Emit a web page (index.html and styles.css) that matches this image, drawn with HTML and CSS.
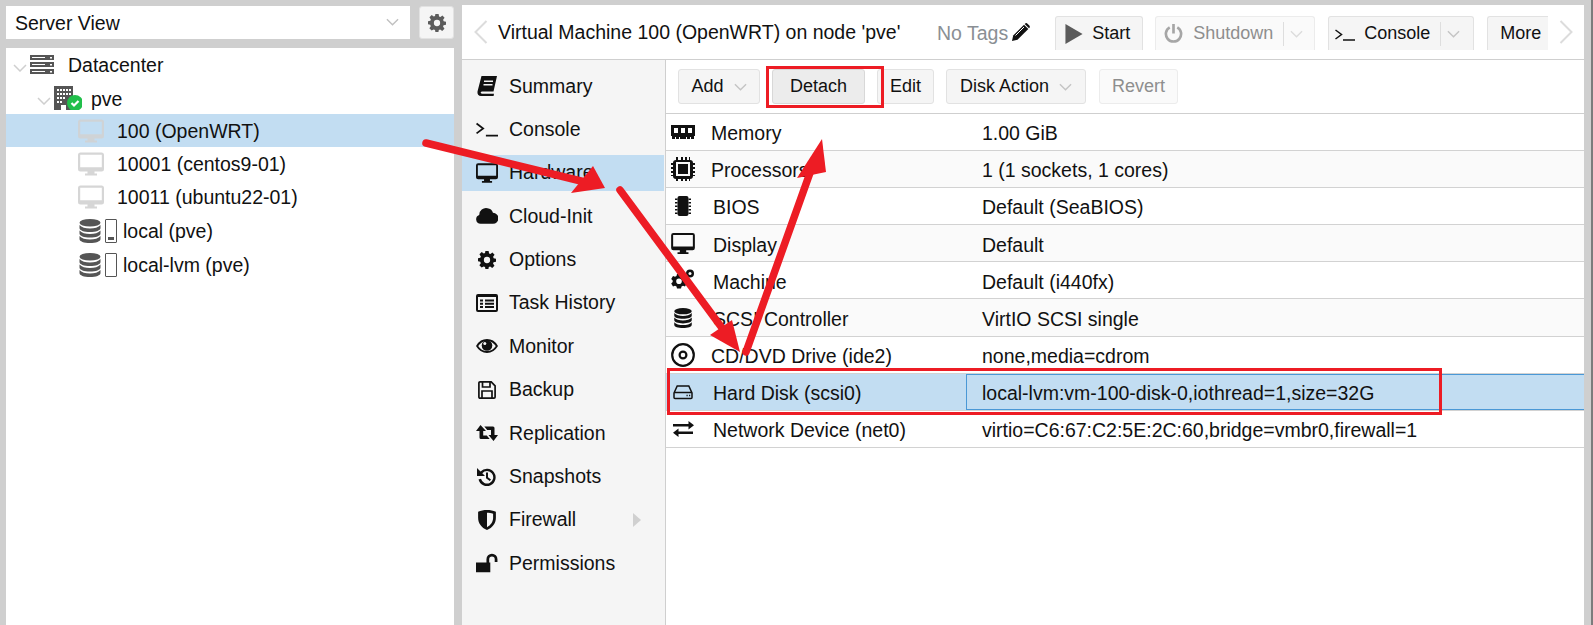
FILE: index.html
```html
<!DOCTYPE html>
<html lang="en">
<head>
<meta charset="utf-8">
<title>Virtual Machine 100</title>
<link rel="stylesheet" href="styles.css">
</head>
<body>
<svg width="0" height="0" class="defs">
  <defs>
    <symbol id="i-monitor" viewBox="0 0 26 23"><path fill-rule="evenodd" d="M2.500 0h21A2.500 2.500 0 0 1 26 2.500v14a2.500 2.500 0 0 1-2.500 2.500h-21A2.500 2.500 0 0 1 0 16.500v-14A2.500 2.500 0 0 1 2.500 0zM2.200 2.200v12.600h21.600V2.200zM9.500 19h7v2h2.500v2H7v-2h2.500z"/></symbol>
    <symbol id="i-db" viewBox="0 0 22 24"><ellipse cx="11" cy="3.800" rx="10.500" ry="3.800"/><path d="M.5 6c2 2.500 6 3.500 10.500 3.500S19.500 8.500 21.500 6v3c0 2.500-4.500 4-10.500 4S.5 11.500.5 9z"/><path d="M.5 11.500c2 2.500 6 3.500 10.500 3.500s8.500-1 10.500-3.500v3c0 2.500-4.500 4-10.500 4S.5 17 .5 14.500z"/><path d="M.5 17c2 2.500 6 3.500 10.500 3.500S19.500 19.500 21.500 17v3c0 2.500-4.500 4-10.500 4S.5 22.500.5 20z"/></symbol>
    <symbol id="i-gear" viewBox="0 0 20 20"><path fill-rule="evenodd" d="M8.200 0h3.600l.5 2.700 1.500.6L16 1.700l2.400 2.500-1.600 2.300.6 1.500 2.600.5v3.500l-2.700.5-.6 1.500 1.600 2.300-2.500 2.500-2.300-1.600-1.500.6-.5 2.700H8.300l-.5-2.700-1.500-.6L4 18.300l-2.500-2.500 1.600-2.300-.6-1.500L0 11.500V8l2.600-.5.6-1.500-1.600-2.300L4.100 1.200l2.300 1.600 1.400-.6zM10 6.500a3.500 3.500 0 1 0 0 7 3.500 3.500 0 0 0 0-7z"/></symbol>
  </defs>
</svg>

<div class="app">
  <aside class="left">
    <div class="left-top">
      <div class="select">
        <span class="select-text">Server View</span>
        <svg class="chev chev-gray" viewBox="0 0 14 8"><path d="M1 1l6 6 6-6"/></svg>
      </div>
      <div class="gear-btn"><svg class="gear-icon"><use href="#i-gear"/></svg></div>
    </div>
    <div class="tree">
      <div class="tree-row lvl0">
        <svg class="chev chev-tree" viewBox="0 0 14 8"><path d="M1 1l6 6 6-6"/></svg>
        <svg class="ic-dc" viewBox="0 0 24 19"><path d="M0 0h24v5H0zM0 7h24v5H0zM0 14h24v5H0z" fill="#555"/><path d="M2 2h13v1H2zM2 9h13v1H2zM2 16h13v1H2zM20 2h2v1.500h-2zM20 9h2v1.500h-2zM20 16h2v1.500h-2z" fill="#fff"/></svg>
        <span class="tree-text dc-text">Datacenter</span>
      </div>
      <div class="tree-row lvl1">
        <svg class="chev chev-tree" viewBox="0 0 14 8"><path d="M1 1l6 6 6-6"/></svg>
        <svg class="ic-node" viewBox="0 0 28 24">
          <path d="M0 0h19v24H0z" fill="#555"/>
          <path d="M3 3h2v2H3zM6 3h2v2H6zM9 3h2v2H9zM12 3h2v2h-2zM15 3h2v2h-2zM3 7h2v2H3zM6 7h2v2H6zM9 7h2v2H9zM12 7h2v2h-2zM15 7h2v2h-2zM3 11h2v2H3zM6 11h2v2H6zM9 11h2v2H9zM3 15h2v2H3zM6 15h2v2H6zM7 19h5v5H7z" fill="#fff"/>
          <circle cx="21" cy="17" r="8" fill="#21bf4b"/>
          <path d="M17.500 17l2.500 2.500 4.500-4.500" fill="none" stroke="#fff" stroke-width="2.200"/>
        </svg>
        <span class="tree-text">pve</span>
      </div>
      <div class="tree-row vm selected">
        <svg class="ic-vm"><use href="#i-monitor"/></svg>
        <span class="tree-text">100 (OpenWRT)</span>
      </div>
      <div class="tree-row vm">
        <svg class="ic-vm"><use href="#i-monitor"/></svg>
        <span class="tree-text">10001 (centos9-01)</span>
      </div>
      <div class="tree-row vm">
        <svg class="ic-vm"><use href="#i-monitor"/></svg>
        <span class="tree-text">10011 (ubuntu22-01)</span>
      </div>
      <div class="tree-row st">
        <svg class="ic-db"><use href="#i-db"/></svg>
        <span class="st-bar"><span class="st-fill"></span></span>
        <span class="tree-text">local (pve)</span>
      </div>
      <div class="tree-row st">
        <svg class="ic-db"><use href="#i-db"/></svg>
        <span class="st-bar"></span>
        <span class="tree-text">local-lvm (pve)</span>
      </div>
    </div>
  </aside>

  <main class="right">
    <header class="head">
      <svg class="nav nav-l" viewBox="0 0 14 30"><path d="M12.500 4L1.500 15l11 11"/></svg>
      <span class="title">Virtual Machine 100 (OpenWRT) on node 'pve'</span>
      <span class="tags">No Tags</span>
      <svg class="pencil" viewBox="0 0 18 18"><path d="M0 18l1.200-5.500L12 1.700 16.300 6 5.500 16.800z"/><path d="M13 .7c.8-.8 1.800-.8 2.500 0l1.800 1.800c.7.700.7 1.700 0 2.500L17 5.300 12.700 1z"/><path d="M3.500 12.500L12 4" stroke="#fff" fill="none"/></svg>
      <div class="btn hbtn b-start"><svg class="play" viewBox="0 0 18 21"><path d="M0 0l18 10.500L0 21z"/></svg><span>Start</span></div>
      <div class="btn hbtn b-shut disabled">
        <svg class="power" viewBox="0 0 20 20"><path d="M6 3.500a8 8 0 1 0 8 0" fill="none" stroke="#a6a6a6" stroke-width="2.800"/><path d="M8.600 0h2.800v10H8.600z" fill="#a6a6a6"/></svg>
        <span>Shutdown</span><i class="sep"></i>
        <svg class="chev chev-btn" viewBox="0 0 14 8"><path d="M1 1l6 6 6-6"/></svg>
      </div>
      <div class="btn hbtn b-cons">
        <svg class="prompt" viewBox="0 0 20 12"><path d="M.5 1l6 4.500-6 4.500M8 11h12"/></svg>
        <span>Console</span><i class="sep"></i>
        <svg class="chev chev-btn" viewBox="0 0 14 8"><path d="M1 1l6 6 6-6"/></svg>
      </div>
      <div class="btn hbtn b-more"><span>More</span></div>
      <svg class="nav nav-r" viewBox="0 0 14 30"><path d="M1.500 4L12.500 15l-11 11"/></svg>
    </header>

    <div class="body">
      <nav class="side">
        <div class="side-item"><svg class="si" viewBox="0 0 20 20"><path d="M4.500 0H20l-3.500 15.500H5c-1 0-1.500 1-1.200 1.500.2.500.8.800 1.400.8H17l-.4 2.200H4C1.500 20 0 18 .5 15.500zM7 4.500v1.500h9V4.500zM6.500 8v1.500h9V8z" fill-rule="evenodd"/></svg><span>Summary</span></div>
        <div class="side-item"><svg class="si si-stroke" viewBox="0 0 20 14"><path d="M.5 2l6 4.500-6 4.500M9 13h11"/></svg><span>Console</span></div>
        <div class="side-item active"><svg class="si"><use href="#i-monitor"/></svg><span>Hardware</span></div>
        <div class="side-item"><svg class="si si-cloud" viewBox="0 0 24 17"><path d="M5 17a5 5 0 0 1-1.500-9.700A7.500 7.500 0 0 1 12.500 0a7 7 0 0 1 6 5A6 6 0 0 1 18.500 17z"/></svg><span>Cloud-Init</span></div>
        <div class="side-item"><svg class="si si-gear"><use href="#i-gear"/></svg><span>Options</span></div>
        <div class="side-item"><svg class="si" viewBox="0 0 22 18"><path fill-rule="evenodd" d="M2 0h18a2 2 0 0 1 2 2v14a2 2 0 0 1-2 2H2a2 2 0 0 1-2-2V2a2 2 0 0 1 2-2zM2 3v13h18V3zM4 5.500h3v2H4zM9 5.500h9v2H9zM4 8.800h3v2H4zM9 8.800h9v2H9zM4 12h3v2H4zM9 12h9v2H9z"/></svg><span>Task History</span></div>
        <div class="side-item"><svg class="si" viewBox="0 0 22 14"><path d="M1.100 7C3.400 3.200 7 1 11 1s7.600 2.200 9.900 6c-2.300 3.800-5.900 6-9.900 6S3.400 10.800 1.100 7z" fill="none" stroke="#111" stroke-width="1.800"/><circle cx="11" cy="6.500" r="5.300"/><circle cx="8.800" cy="4.500" r="1.500" fill="#f5f5f5"/></svg><span>Monitor</span></div>
        <div class="side-item"><svg class="si si-save" viewBox="0 0 18 18"><g fill="none" stroke="#111" stroke-width="1.700"><path d="M2 .9h11.200l3.900 3.900V16a1.100 1.100 0 0 1-1.100 1.100H2A1.100 1.100 0 0 1 .9 16V2A1.100 1.100 0 0 1 2 .9z"/><path d="M4.500 1v5h7.500V1M4 17v-7h10v7"/></g></svg><span>Backup</span></div>
        <div class="side-item"><svg class="si" viewBox="0 0 22 16"><path d="M4.500 0L10 6H7.200v4.500h3.600l2.900 3.500H5a1.500 1.500 0 0 1-1.500-1.500V6H0z"/><path d="M8.300 1.500H17a1.500 1.500 0 0 1 1.500 1.500v7H22l-4.500 6-5-6H15V5h-3.800z"/></svg><span>Replication</span></div>
        <div class="side-item"><svg class="si si-hist" viewBox="0 0 20 20"><path d="M3.500 4.500A8.700 8.700 0 1 1 1.500 12.500l2.500-.7a6.200 6.200 0 1 0 1.300-5.500L8 9H0V1zM9 5.500h2v4.700l3 2.200-1.200 1.600L9 11.300z"/></svg><span>Snapshots</span></div>
        <div class="side-item has-arrow"><svg class="si si-shield" viewBox="0 0 16 18"><path fill-rule="evenodd" d="M0 1.500C2.500.5 5 0 8 0s5.500.5 8 1.500V7c0 5-3 9-8 11C3 16 0 12 0 7zM8 2.500v13c3.500-1.800 5.500-5 5.500-8.500V3.300C11.500 2.800 10 2.500 8 2.500z"/></svg><span>Firewall</span><i class="tri"></i></div>
        <div class="side-item"><svg class="si" viewBox="0 0 20 17"><path d="M0 8h13v9H0zM9.500 8V5a5 5 0 0 1 10 0v2.500h-2.500V5a2.500 2.500 0 0 0-5 0v3z"/></svg><span>Permissions</span></div>
      </nav>

      <section class="content">
        <div class="toolbar">
          <div class="btn tbtn b-add"><span>Add</span><svg class="chev chev-btn" viewBox="0 0 14 8"><path d="M1 1l6 6 6-6"/></svg></div>
          <div class="btn tbtn b-detach"><span>Detach</span></div>
          <div class="btn tbtn b-edit"><span>Edit</span></div>
          <div class="btn tbtn b-disk"><span>Disk Action</span><svg class="chev chev-btn" viewBox="0 0 14 8"><path d="M1 1l6 6 6-6"/></svg></div>
          <div class="btn tbtn b-revert disabled"><span>Revert</span></div>
        </div>
        <div class="grid">
          <div class="row">
            <div class="c-name"><svg class="ri ri-mem" viewBox="0 0 24 14"><path fill-rule="evenodd" d="M0 0h24v11h-1v3h-3v-2h-1v2h-3v-2h-1v2h-6v-2H8v2H5v-2H4v2H1v-3H0zM3 3v5h4V3zM10 3v5h4V3zM17 3v5h4V3z"/></svg><span>Memory</span></div>
            <div class="c-val">1.00 GiB</div>
          </div>
          <div class="row alt">
            <div class="c-name"><svg class="ri ri-cpu" viewBox="0 0 24 24"><path fill-rule="evenodd" d="M5 0h2v3h3V0h2v3h2V0h2v3h2V0h1v3a3 3 0 0 1 3 3h3v2h-3v2h3v2h-3v2h3v2h-3v2h3v1h-3a3 3 0 0 1-3 3v3h-1v-3h-2v3h-2v-3h-2v3h-2v-3H7v3H5v-3a3 3 0 0 1-3-3H0v-1h2v-2H0v-2h2v-2H0v-2h2V8H0V6h2a3 3 0 0 1 3-3zM5 5v14h14V5zM7 7h10v10H7z"/></svg><span>Processors</span></div>
            <div class="c-val">1 (1 sockets, 1 cores)</div>
          </div>
          <div class="row">
            <div class="c-name"><svg class="ri ri-bios" viewBox="0 0 18 20"><path d="M5.500 0h7a2 2 0 0 1 2 2v16a2 2 0 0 1-2 2h-7a2 2 0 0 1-2-2V2a2 2 0 0 1 2-2z"/><path d="M1 2.500h2.500V4H1zM1 6h2.500v1.500H1zM1 9.500h2.500V11H1zM1 13h2.500v1.500H1zM1 16.500h2.500V18H1zM14.500 2.500H17V4h-2.500zM14.500 6H17v1.500h-2.500zM14.500 9.500H17V11h-2.500zM14.500 13H17v1.500h-2.500zM14.500 16.500H17V18h-2.500z"/></svg><span>BIOS</span></div>
            <div class="c-val">Default (SeaBIOS)</div>
          </div>
          <div class="row alt">
            <div class="c-name"><svg class="ri ri-disp"><use href="#i-monitor"/></svg><span>Display</span></div>
            <div class="c-val">Default</div>
          </div>
          <div class="row">
            <div class="c-name"><svg class="ri ri-cogs" viewBox="0 0 24 22"><g><path fill-rule="evenodd" d="M6 5h4l.5 2 1.500.8 2-.8 1.800 3-1.500 1.500v1.500l1.500 1.500-1.800 3-2-.8-1.500.8L10 19.500H6L5.500 17.500 4 16.700l-2 .8L.2 14.500 1.700 13v-1.500L.2 10 2 7l2 .8 1.500-.8zM8 9.500a2.800 2.800 0 1 0 0 5.600 2.800 2.800 0 0 0 0-5.600z"/><circle cx="19" cy="4.500" r="4" /><circle cx="19" cy="4.500" r="1.500" fill="#fff"/></g></svg><span>Machine</span></div>
            <div class="c-val">Default (i440fx)</div>
          </div>
          <div class="row alt">
            <div class="c-name"><svg class="ri ri-db"><use href="#i-db"/></svg><span>SCSI Controller</span></div>
            <div class="c-val">VirtIO SCSI single</div>
          </div>
          <div class="row">
            <div class="c-name"><svg class="ri ri-cd" viewBox="0 0 24 24"><circle cx="12" cy="12" r="10.800" fill="none" stroke="#111" stroke-width="2.200"/><circle cx="12" cy="12" r="3.400" fill="none" stroke="#111" stroke-width="2.200"/></svg><span>CD/DVD Drive (ide2)</span></div>
            <div class="c-val">none,media=cdrom</div>
          </div>
          <div class="row sel">
            <div class="c-name"><svg class="ri ri-hdd" viewBox="0 0 24 15"><path d="M3 8.500L6.200 1.500h11.600L21 8.500V13a1 1 0 0 1-1 1H4a1 1 0 0 1-1-1zM3 8h18M15.500 11h1.200M18 11h1.200" fill="none" stroke="#111" stroke-width="1.500"/></svg><span>Hard Disk (scsi0)</span></div>
            <div class="c-val focus">local-lvm:vm-100-disk-0,iothread=1,size=32G</div>
          </div>
          <div class="row">
            <div class="c-name"><svg class="ri ri-net" viewBox="0 0 24 16"><path d="M2 3h15.500V0L23 4.300l-5.500 4.200V5.500H2zM22 10.500H7.500v-3L2 11.700 7.500 16v-3H22z"/></svg><span>Network Device (net0)</span></div>
            <div class="c-val">virtio=C6:67:C2:5E:2C:60,bridge=vmbr0,firewall=1</div>
          </div>
        </div>
      </section>
    </div>
  </main>
</div>

<svg class="overlay" viewBox="0 0 1593 625">
  <rect class="mark" x="767.500" y="67.500" width="115" height="39"/>
  <rect class="mark" x="668.500" y="369.500" width="772" height="44"/>
  <line class="arrow-line" x1="426" y1="143" x2="585" y2="182"/>
  <polygon class="arrow-head" points="605,188 571,193 593,166"/>
  <line class="arrow-line" x1="620" y1="190" x2="725" y2="332"/>
  <polygon class="arrow-head" points="740,352 710,335 732,320"/>
  <line class="arrow-line" x1="746" y1="352" x2="811" y2="170"/>
  <polygon class="arrow-head" points="822,139 826,172 797,178"/>
</svg>
</body>
</html>
```
FILE: styles.css
```css
* { box-sizing: border-box; }
html, body { margin: 0; height: 100%; }
body {
  width: 1593px;
  height: 625px;
  background: #cfcfcf;
  border-right: 2px solid #7c7c7c;
  overflow: hidden;
  position: relative;
  font-family: "Liberation Sans", Arial, sans-serif;
  font-size: 19.500px;
  color: #111;
}
.defs { position: absolute; }
.app { display: flex; height: 625px; padding-left: 6px; gap: 8px; }

/* left column */
.left { width: 448px; display: flex; flex-direction: column; padding-top: 6px; gap: 9px; flex: none; }
.left-top { display: flex; gap: 9px; height: 33px; }
.select { width: 404px; background: #fff; display: flex; align-items: center; justify-content: space-between; padding: 0 11px 0 9px; }
.select-text { line-height: 1; padding-top: 2px; }
.gear-btn { width: 35px; background: #f5f5f5; border: 1px solid #e2e2e2; border-radius: 3px; display: flex; align-items: center; justify-content: center; }
.gear-icon { width: 18px; height: 18px; fill: #5c5c5c; }
.chev { fill: none; stroke: #cfcfcf; stroke-width: 1.500; }
.chev-gray { width: 13px; height: 8px; stroke: #c0c0c0; margin-top: -2px; }
.tree { flex: 1; background: #fff; display: flex; flex-direction: column; }
.tree-row { height: 33px; display: flex; align-items: center; flex: none; }
.tree-row:nth-child(n+6) { height: 34px; }
.tree-text { padding-top: 2px; }
.lvl0 { padding-left: 7px; }
.lvl1 { padding-left: 31px; }
.lvl1 .tree-text { padding-top: 4px; }
.chev-tree { width: 14px; height: 8px; margin-top: 6px; }
.ic-dc { width: 24px; height: 19px; margin-left: 3px; margin-right: 14px; }
.dc-text { padding-top: 1px; }
.ic-node { width: 28px; height: 24px; margin-left: 3px; margin-right: 9px; }
.vm { padding-left: 72px; }
.ic-vm { width: 26px; height: 24px; fill: #d6d6d6; margin-right: 13px; }
.selected { background: #c2ddf2; }
.selected .ic-vm { fill: #cfd3d6; }
.st { padding-left: 73px; padding-top: 2px; }
.st .tree-text { padding-top: 1px; }
.ic-db { width: 22px; height: 24px; fill: #555; margin-right: 4px; }
.st-bar { width: 12px; height: 24px; border: 1px solid #555; border-radius: 1px; background: #fff; margin-right: 6px; display: flex; align-items: flex-end; padding: 0 2px 2px; }
.st-fill { display: block; width: 100%; height: 3px; background: #555; }

/* right panel */
.right { width: 1122px; flex: none; margin-top: 5px; background: #fff; display: flex; flex-direction: column; height: 620px; }
.head { height: 55px; flex: none; border-bottom: 1px solid #cfcfcf; display: flex; align-items: flex-start; position: relative; }
.nav { fill: none; stroke: #dcdcdc; stroke-width: 2; width: 14px; height: 30px; margin-top: 12px; flex: none; }
.nav-l { margin-left: 12px; }
.title { margin-left: 10px; margin-top: 16px; line-height: 22px; width: 439px; white-space: nowrap; }
.tags { color: #8a8f94; margin-top: 17px; line-height: 22px; }
.pencil { width: 18px; height: 18px; margin-left: 4px; margin-top: 18px; fill: #111; flex: none; }

.btn { display: flex; align-items: center; background: #f5f5f5; border: 1px solid #e2e2e2; border-radius: 3px; color: #111; font-size: 18px; white-space: nowrap; flex: none; }
.btn.disabled { background: #fafafa; border-color: #ececec; color: #8e8e8e; }
.hbtn { height: 34px; margin-top: 11px; border-bottom: 0; border-radius: 3px 3px 0 0; }
.b-start { width: 88px; margin-left: 25px; padding-left: 9px; }
.play { width: 18px; height: 20px; fill: #5b5b5b; margin-right: 9px; }
.b-shut { width: 160px; margin-left: 12px; padding-left: 8px; }
.power { width: 19px; height: 19px; margin-right: 10px; }
.sep { display: block; width: 1px; height: 24px; background: #dedede; margin-left: 10px; margin-right: 6px; }
.chev-btn { width: 13px; height: 8px; stroke: #c4c4c4; flex: none; }
.b-shut .chev-btn { stroke: #dcdcdc; }
.b-cons { width: 146px; margin-left: 13px; padding-left: 6px; }
.prompt { width: 20px; height: 12px; fill: none; stroke: #111; stroke-width: 1.500; margin-right: 9px; margin-top: 3px; }
.b-more { width: 61px; margin-left: 13px; padding-left: 12px; border-right: 0; border-radius: 3px 0 0 0; }
.nav-r { margin-left: 11px; }

.body { flex: 1; display: flex; min-height: 0; }
.side { width: 204px; flex: none; background: #f5f5f5; border-right: 1px solid #cfcfcf; padding-top: 8px; display: flex; flex-direction: column; }
.side-item { height: 36px; margin-bottom: 7.400px; display: flex; align-items: center; padding-left: 14px; position: relative; flex: none; }
.side-item.active { background: #c2ddf2; margin-right: 1px; }
.si { width: 22px; height: 20px; margin-right: 11px; flex: none; fill: #111; }
.si-stroke { fill: none; stroke: #111; stroke-width: 1.600; }
.si-gear { width: 18px; height: 18px; margin-left: 2px; margin-right: 13px; }
.si-save { width: 18px; height: 18px; margin-left: 2px; margin-right: 13px; }
.tri { position: absolute; left: 171px; top: 11px; border-left: 8px solid #d0d0d0; border-top: 7px solid transparent; border-bottom: 7px solid transparent; }

.content { flex: 1; min-width: 0; display: flex; flex-direction: column; }
.toolbar { height: 54px; flex: none; border-bottom: 1px solid #cfcfcf; padding: 9px 0 0 12px; display: flex; }
.tbtn { height: 35px; justify-content: center; }
.b-add { width: 82px; gap: 10px; }
.b-detach { width: 93px; margin-left: 12px; background: #ececec; border-color: #d8d8d8; }
.b-edit { width: 57px; margin-left: 12px; }
.b-disk { width: 140px; margin-left: 12px; gap: 10px; }
.b-revert { width: 79px; margin-left: 13px; }

.grid { display: flex; flex-direction: column; }
.row { height: 37.100px; flex: none; display: flex; border-bottom: 1px solid #d2d2d2; align-items: stretch; }
.row.alt { background: #fafafa; }
.row.sel { background: #c2ddf2; }
.c-name { width: 300px; flex: none; display: flex; align-items: center; padding-left: 5px; white-space: nowrap; }
.c-name span, .c-val { padding-top: 3.500px; }
.c-val { flex: 1; display: flex; align-items: center; padding-left: 16px; white-space: nowrap; }
.c-val.focus { border: 1px solid #4a98d6; border-right: 0; padding-left: 15px; }
.ri { width: 24px; height: 24px; fill: #111; margin-right: 16px; flex: none; }
.ri-mem { height: 14px; }
.ri-bios { height: 20px; margin-right: 18px; }
.ri-disp { height: 21px; margin-right: 18px; }
.ri-cogs, .ri-net { margin-right: 18px; }
.ri-db { height: 20px; margin-right: 18px; }
.ri-hdd { margin-right: 18px; }
.ri-cd { margin-right: 16px; }

/* annotation layer */
.overlay { position: absolute; left: 0; top: 0; width: 1593px; height: 625px; pointer-events: none; }
.mark { fill: none; stroke: #ed1c24; stroke-width: 3; }
.arrow-line { stroke: #ed1c24; stroke-width: 7.500; stroke-linecap: round; }
.arrow-head { fill: #ed1c24; }
```
